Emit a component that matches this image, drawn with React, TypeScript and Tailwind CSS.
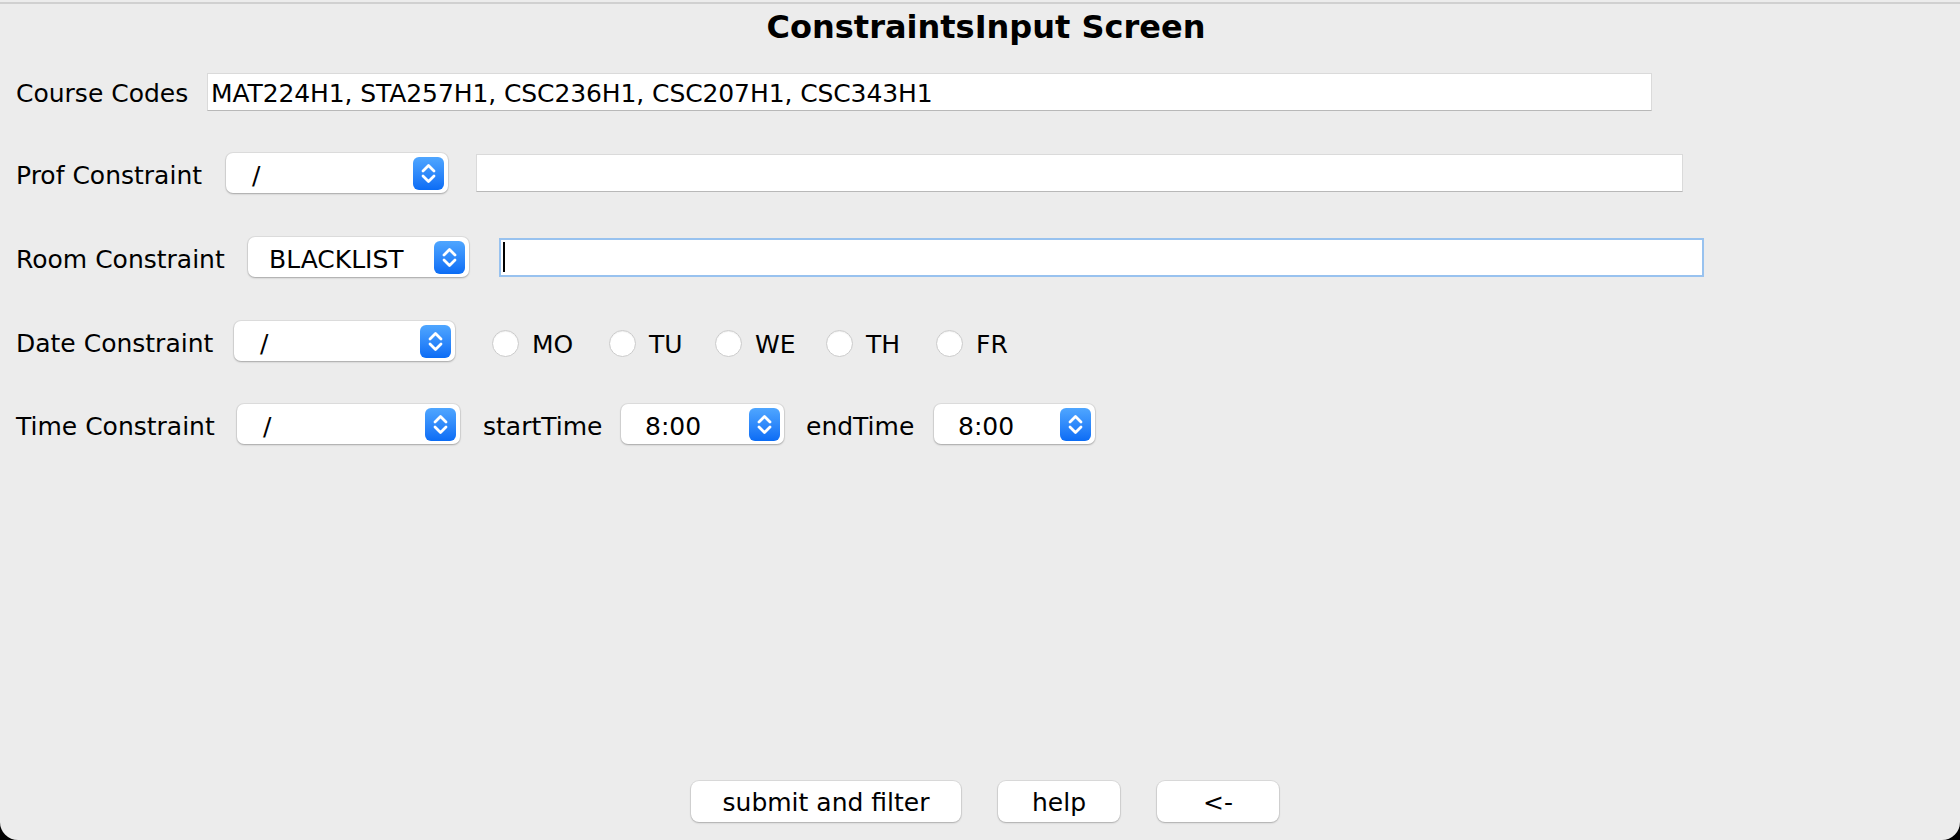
import React from "react"

function Chevrons() {
  return (
    <svg width="31" height="33" viewBox="0 0 31 33" fill="none">
      <path d="M10 14 L15.5 8.5 L21 14" stroke="white" strokeWidth="2.8" strokeLinecap="round" strokeLinejoin="round" />
      <path d="M10 19 L15.5 24.5 L21 19" stroke="white" strokeWidth="2.8" strokeLinecap="round" strokeLinejoin="round" />
    </svg>
  )
}

function Combo({ value, width, pad }: { value: string; width: string; pad: string }) {
  return (
    <div className={`${width} h-[40px] shrink-0 rounded-[7px] bg-white shadow-[0_0_0_1px_rgba(0,0,0,0.06),0_1px_2px_rgba(0,0,0,0.25)] flex items-center justify-between pr-[4px]`}>
      <span className={`${pad} pt-[5px] whitespace-nowrap`}>{value}</span>
      <div className="w-[31px] h-[33px] rounded-[6px] bg-linear-to-b from-[#4fa6ff] to-[#0a6cf5] flex items-center justify-center">
        <Chevrons />
      </div>
    </div>
  )
}

function Radio({ label, width }: { label: string; width: string }) {
  return (
    <div className={`${width} shrink-0 flex items-center`}>
      <div className="w-[27px] h-[27px] rounded-full bg-white border border-[#cbcbcb] shadow-[inset_0_1px_1px_rgba(0,0,0,0.06)]" />
      <span className="ml-[13px] pt-[2px]">{label}</span>
    </div>
  )
}

function Button({ label, width }: { label: string; width: string }) {
  return (
    <div className={`${width} h-[41px] rounded-[8px] bg-white shadow-[0_0_0_1px_rgba(0,0,0,0.07),0_1px_2px_rgba(0,0,0,0.22)] flex items-center justify-center pt-[2px]`}>
      {label}
    </div>
  )
}

export default function App() {
  return (
    <div className="w-[1960px] h-[840px] bg-black font-['DejaVu_Sans',sans-serif] text-[25px] text-black">
      <div className="h-full bg-[#ececec] rounded-b-[18px] flex flex-col overflow-hidden">
        <div className="h-[2px]" />
        <div className="h-[2px] bg-[#d0d0d0]" />

        <div className="mt-[7px] pl-[12px] flex justify-center">
          <h1 className="text-[32px] font-bold leading-[32px]">ConstraintsInput Screen</h1>
        </div>

        {/* course codes */}
        <div className="mt-[29px] h-[40px] pl-[16px] flex items-center">
          <span className="w-[191px] shrink-0 whitespace-nowrap pt-[3px]">Course Codes</span>
          <div className="w-[1445px] h-[38px] bg-white border border-[#dadada] border-b-[#b8b8b8] flex items-center pl-[3px] pt-[3px] whitespace-nowrap tracking-[-0.1px]">
            MAT224H1, STA257H1, CSC236H1, CSC207H1, CSC343H1
          </div>
        </div>

        {/* prof */}
        <div className="mt-[41px] h-[40px] pl-[16px] flex items-center">
          <span className="w-[210px] shrink-0 whitespace-nowrap pt-[5px]">Prof Constraint</span>
          <Combo value="/" width="w-[222px]" pad="pl-[26px]" />
          <div className="ml-[28px] w-[1207px] h-[38px] bg-white border border-[#dadada] border-b-[#b8b8b8]" />
        </div>

        {/* room */}
        <div className="mt-[44px] h-[40px] pl-[16px] flex items-center">
          <span className="w-[232px] shrink-0 whitespace-nowrap pt-[5px]">Room Constraint</span>
          <Combo value="BLACKLIST" width="w-[221px]" pad="pl-[21px]" />
          <div className="ml-[30px] w-[1205px] h-[39px] bg-white border-2 border-[#98c2ef] flex items-center pl-[2px]">
            <div className="w-[2px] h-[30px] bg-black" />
          </div>
        </div>

        {/* date */}
        <div className="mt-[44px] h-[40px] pl-[16px] flex items-center">
          <span className="w-[218px] shrink-0 whitespace-nowrap pt-[5px]">Date Constraint</span>
          <Combo value="/" width="w-[221px]" pad="pl-[26px]" />
          <div className="ml-[37px] pt-[5px] flex items-center">
            <Radio label="MO" width="w-[117px]" />
            <Radio label="TU" width="w-[106px]" />
            <Radio label="WE" width="w-[111px]" />
            <Radio label="TH" width="w-[110px]" />
            <Radio label="FR" width="w-[80px]" />
          </div>
        </div>

        {/* time */}
        <div className="mt-[43px] h-[40px] pl-[16px] flex items-center">
          <span className="w-[221px] shrink-0 whitespace-nowrap pt-[5px]">Time Constraint</span>
          <Combo value="/" width="w-[223px]" pad="pl-[26px]" />
          <span className="ml-[23px] w-[138px] shrink-0 pt-[5px]">startTime</span>
          <Combo value="8:00" width="w-[163px]" pad="pl-[24px]" />
          <span className="ml-[22px] w-[128px] shrink-0 pt-[5px]">endTime</span>
          <Combo value="8:00" width="w-[161px]" pad="pl-[24px]" />
        </div>

        <div className="mt-auto mb-[18px] pl-[10px] flex justify-center gap-[37px]">
          <Button label="submit and filter" width="w-[270px]" />
          <Button label="help" width="w-[122px]" />
          <Button label="<-" width="w-[122px]" />
        </div>
      </div>
    </div>
  )
}
